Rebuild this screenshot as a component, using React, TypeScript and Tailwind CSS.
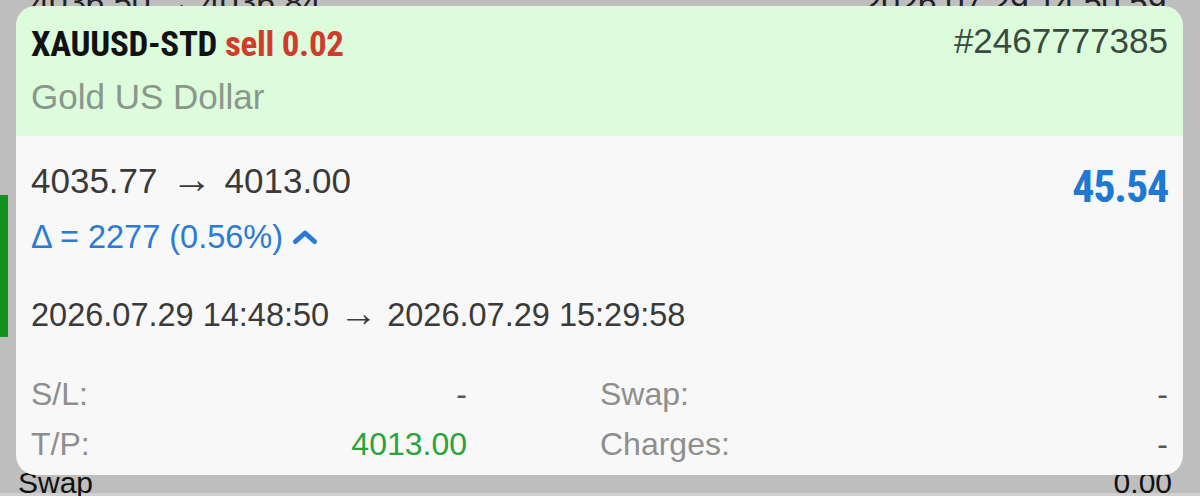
export default function App() {
  const rows = [
    { label: "S/L:", value: "-", green: false },
    { label: "Swap:", value: "-", green: false },
    { label: "T/P:", value: "4013.00", green: true },
    { label: "Charges:", value: "-", green: false },
  ];
  return (
    <div className="relative h-[496px] w-[1200px] overflow-hidden bg-[#bebebe] font-['Liberation_Sans',Arial,sans-serif]">
      <div className="flex h-[496px] flex-col border-b-[3px] border-[#cfcfcf]">
        <div className="-mt-[17px] flex h-[40px] items-center justify-between whitespace-nowrap pl-[31px] pr-[34px] text-[33px] leading-[40px] text-[#222]">
          <span>4036.50 → 4036.84</span>
          <span>2026.07.29 14:50:59</span>
        </div>
        <div className="mt-[172px] h-[142px] w-[8px] bg-[#14901f]" />
        <div className="mt-auto -mb-[8px] flex h-[36px] justify-between pl-[18px] pr-[28px] text-[30px] leading-[36px] text-[#111]">
          <span>Swap</span>
          <span>0.00</span>
        </div>
      </div>

      <div className="absolute left-[16px] top-[6px] h-[469px] w-[1167px] overflow-hidden rounded-[20px] bg-[#f8f8f8]">
        <div className="h-[130px] bg-[#dcfcdc] px-[15px] pt-[17px]">
          <div className="flex items-start justify-between">
            <div className="mt-[4px] h-[36px] whitespace-nowrap font-['Roboto_Condensed',Roboto,sans-serif] text-[35px] font-bold leading-[36px] tracking-[-0.3px]">
              <span className="text-[#111]">XAUUSD-STD</span>{" "}
              <span className="text-[#d03c2c]">sell 0.02</span>
            </div>
            <div className="text-[35px] leading-[36px] text-[#3b4a3e]">#2467777385</div>
          </div>
          <div className="mt-[14px] text-[35px] leading-[40px] text-[#8b978b]">Gold US Dollar</div>
        </div>

        <div className="px-[15px]">
          <div className="flex items-start justify-between">
            <div className="pt-[25px]">
              <div className="h-[40px] whitespace-nowrap text-[35px] leading-[40px] text-[#3a3a3a]">
                4035.77<span className="ml-[14px] mr-[12px] text-[41px] leading-[0px]">→</span>4013.00
              </div>
              <div className="mt-[18px] flex h-[36px] items-center text-[32.5px] leading-[36px] text-[#2b7bd4]">
                <span className="whitespace-nowrap">Δ = 2277 (0.56%)</span>
                <svg className="ml-[9px]" width="26" height="16" viewBox="0 0 26 16" fill="none">
                  <polyline points="3.5,12.5 13,4 22.5,12.5" stroke="#2b7bd4" strokeWidth="5" strokeLinecap="round" strokeLinejoin="round" />
                </svg>
              </div>
            </div>
            <div className="pt-[29px] font-['Roboto_Condensed',Roboto,sans-serif] text-[44px] font-bold leading-[44px] tracking-[-1.2px] text-[#1f78d1]">
              45.54
            </div>
          </div>
          <div className="mt-[40px] h-[40px] whitespace-nowrap text-[32.5px] leading-[40px] text-[#3a3a3a]">
            2026.07.29 14:48:50<span className="ml-[10px] mr-[10px] text-[38px] leading-[0px]">→</span>2026.07.29 15:29:58
          </div>
          <div className="mt-[34px] grid grid-cols-[436px_1fr] gap-x-[133px] text-[32px] leading-[50px]">
            {rows.map((r) => (
              <div key={r.label} className="flex justify-between">
                <span className="text-[#8e8e8e]">{r.label}</span>
                <span className={r.green ? "text-[#2aa43a]" : "text-[#555]"}>{r.value}</span>
              </div>
            ))}
          </div>
        </div>
      </div>
    </div>
  );
}
